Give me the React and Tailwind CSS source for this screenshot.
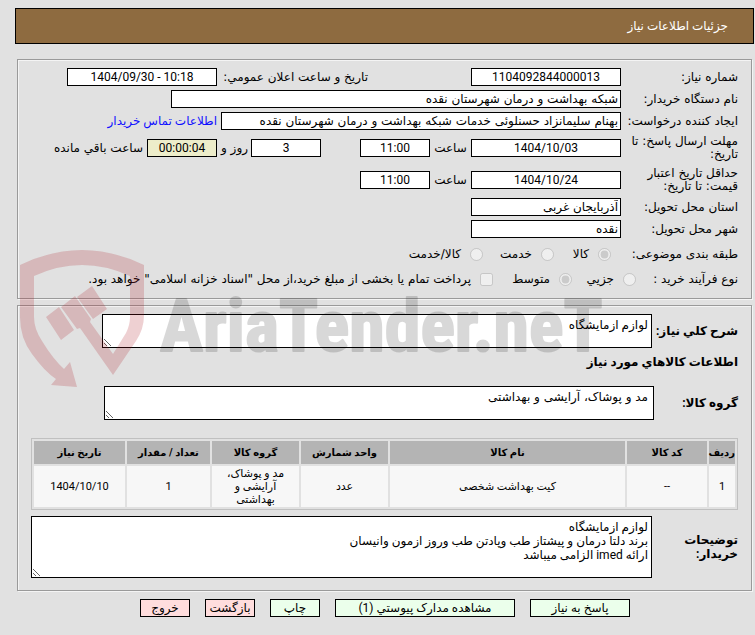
const COLUMNS = [
  { label: 'ردیف', width: 'w-[26px]' },
  { label: 'کد کالا', width: 'w-[80px]' },
  { label: 'نام کالا', width: '' },
  { label: 'واحد شمارش', width: 'w-[87px]' },
  { label: 'گروه کالا', width: 'w-[87px]' },
  { label: 'تعداد / مقدار', width: 'w-[83px]' },
  { label: 'تاریخ نیاز', width: 'w-[91px]' },
];

const ITEMS = [
  ['1', '--', 'کیت بهداشت شخصی', 'عدد', 'مد و پوشاک، آرایشی و بهداشتی', '1', '1404/10/10'],
];

const ACTIONS = [
  { label: 'پاسخ به نیاز', style: 'w-[100px] bg-[#ebffeb]' },
  { label: 'مشاهده مدارک پیوستي (1)', style: 'w-[180px] bg-[#ebffeb]' },
  { label: 'چاپ', style: 'w-[50px] bg-[#ebffeb]' },
  { label: 'بازگشت', style: 'w-[50px] bg-[#ffdddd]' },
  { label: 'خروج', style: 'w-[50px] bg-[#ffdddd]' },
];

function Field({ id, value, className = '', ...rest }) {
  return (
    <input
      id={id}
      type="text"
      readOnly
      defaultValue={value}
      className={`h-[18px] shrink-0 border border-black px-0.5 ${className}`}
      {...rest}
    />
  );
}

// Dates, hours and counts
function NumberField({ className = '', ...rest }) {
  return <Field className={`text-center font-['Roboto','DejaVu_Sans',sans-serif] ${className}`} {...rest} />;
}

function Row({ label, htmlFor, tall = false, children }) {
  return (
    <div className={`flex items-center ${tall ? 'h-8' : 'h-[22px]'}`}>
      <label htmlFor={htmlFor} className="w-[117px] shrink-0 leading-[13px]">{label}</label>
      {children}
    </div>
  );
}

function Choice({ type = 'radio', name, label, checked = false, className = '' }) {
  return (
    <label className={`flex shrink-0 items-center gap-[9px] whitespace-nowrap ${className}`}>
      <input type={type} name={name} defaultChecked={checked} disabled className="size-[13px] shrink-0" />
      {label}
    </label>
  );
}

function Panel({ className = '', children }) {
  return (
    <fieldset className={`ml-[17px] mr-[3px] min-w-0 border border-[#9a9a9a] shadow-[1px_1px_0_#f4f4f4,inset_1px_1px_0_#f4f4f4] ${className}`}>
      {children}
    </fieldset>
  );
}

function Watermark() {
  return (
    <div dir="ltr" aria-hidden="true" className="pointer-events-none absolute left-5 top-[249px]">
      <svg width="600" height="140" viewBox="0 0 600 140">
        <g fill="#aa141e" fillOpacity="0.2">
          <path d="M0 16Q62-14 124 16V66Q124 80 116 92L93 126L60 79L57 80L41 58L55 47L71 70L70 73L93 105L106 84Q110 76 110 68V27Q62 5 14 27V68Q14 80 22 92Q33 110 44 120L50 113L57 138L31 136L36 130Q25 123 12 105Q0 89 0 68Z" />
          <path d="M26 68L39 58L54 81L41 91ZM57 48L72 37L87 60L73 70Z" />
        </g>
        <text
          x="140"
          y="102"
          fill="#000"
          stroke="#000"
          strokeWidth="2"
          strokeLinejoin="round"
          opacity="0.15"
          className="font-['Roboto_Condensed','Liberation_Sans_Narrow','Roboto',sans-serif] text-[72px] font-bold"
        >
          AriaTender.neT
        </text>
      </svg>
    </div>
  );
}

export default function App() {
  return (
    <div dir="rtl" className="relative min-h-screen bg-[#e1e1e1] pt-2 pb-[18px] font-['Roboto','DejaVu_Sans',sans-serif] text-[12px] leading-[14px] text-black">
      <header className="ml-[15px] mr-px flex h-9 items-center border border-black bg-[#8e6b40] px-[25px]">
        <h1 className="text-white">جزئیات اطلاعات نیاز</h1>
      </header>

      {/* Request details */}
      <Panel className="mt-[15px] pt-1.5 pb-2 pr-[13px] font-['DejaVu_Sans',sans-serif]">
        <Row label="شماره نیاز:" htmlFor="number">
          <NumberField id="number" value="1104092844000013" className="w-[150px] bg-white" />
          <label htmlFor="announced" className="mr-[103px] w-[147px] shrink-0 whitespace-nowrap">تاریخ و ساعت اعلان عمومي:</label>
          <NumberField id="announced" dir="ltr" value="1404/09/30 - 10:18" className="mr-1 w-[150px] bg-white" />
        </Row>
        <Row label="نام دستگاه خریدار:" htmlFor="buyer">
          <Field id="buyer" value="شبکه بهداشت و درمان شهرستان نقده" className="w-[450px] bg-white" />
        </Row>
        <Row label="ایجاد کننده درخواست:" htmlFor="creator">
          <Field id="creator" value="بهنام سلیمانزاد حسنلوئی خدمات شبکه بهداشت و درمان شهرستان نقده" className="w-[400px] bg-white" />
          <a href="#contact" className="mr-1 font-['Roboto','DejaVu_Sans',sans-serif] whitespace-nowrap text-[#1010ff]">اطلاعات تماس خریدار</a>
        </Row>
        <Row label="مهلت ارسال پاسخ: تا تاریخ:" htmlFor="deadline" tall>
          <NumberField id="deadline" value="1404/10/03" className="w-[150px] bg-white" />
          <label htmlFor="deadline-hour" className="w-[41px] shrink-0 text-center">ساعت</label>
          <NumberField id="deadline-hour" value="11:00" className="w-[70px] bg-white" />
          <NumberField aria-label="روز" value="3" className="mr-[39px] w-[70px] bg-white" />
          <span className="w-[34px] shrink-0 pr-[3px]">روز و</span>
          <NumberField id="remaining" value="00:00:04" className="w-[70px] bg-[#ededca]" />
          <label htmlFor="remaining" className="mr-1 whitespace-nowrap">ساعت باقي مانده</label>
        </Row>
        <Row label="حداقل تاریخ اعتبار قیمت: تا تاریخ:" htmlFor="validity" tall>
          <NumberField id="validity" value="1404/10/24" className="w-[150px] bg-white" />
          <label htmlFor="validity-hour" className="w-[41px] shrink-0 text-center">ساعت</label>
          <NumberField id="validity-hour" value="11:00" className="w-[70px] bg-white" />
        </Row>
        <Row label="استان محل تحویل:" htmlFor="province">
          <Field id="province" value="آذربایجان غربی" className="w-[150px] bg-white" />
        </Row>
        <Row label="شهر محل تحویل:" htmlFor="city">
          <Field id="city" value="نقده" className="w-[150px] bg-white" />
        </Row>
        <div className="flex h-7 items-center">
          <span className="w-[127px] shrink-0">طبقه بندی موضوعی:</span>
          <Choice name="subject" label="کالا" checked className="w-[57px]" />
          <Choice name="subject" label="خدمت" className="w-[71px]" />
          <Choice name="subject" label="کالا/خدمت" />
        </div>
        <div className="flex h-[22px] items-center">
          <span className="w-[102px] shrink-0">نوع فرآیند خرید :</span>
          <Choice name="process" label="جزیي" className="w-[64px]" />
          <Choice name="process" label="متوسط" checked className="w-[79px]" />
          <Choice type="checkbox" name="treasury" label='پرداخت تمام یا بخشی از مبلغ خرید،از محل "اسناد خزانه اسلامی" خواهد بود.' />
        </div>
      </Panel>

      {/* Goods */}
      <Panel className="mt-1.5 pt-2 pb-3 pl-[13px] pr-[13px]">
        <div className="flex items-center">
          <label htmlFor="summary" className="w-[86px] shrink-0 font-bold">شرح کلي نیاز:</label>
          <textarea id="summary" readOnly defaultValue="لوازم ازمایشگاه" className="h-[34px] w-[550px] resize border border-black bg-white p-[3px]" />
        </div>
        <h2 className="mt-[7px] font-bold">اطلاعات کالاهاي مورد نیاز</h2>
        <div className="mt-[17px] flex items-center">
          <label htmlFor="group" className="w-[84px] shrink-0 font-bold">گروه کالا:</label>
          <textarea id="group" readOnly defaultValue="مد و پوشاک، آرایشی و بهداشتی" className="h-[34px] w-[550px] resize border border-black bg-white p-[3px] pr-[5px] font-['DejaVu_Sans',sans-serif]" />
        </div>

        <table className="mt-[18px] w-full table-fixed border-separate border-spacing-0.5 border border-[#c0c0c0] text-center text-[11px] leading-[13px]">
          <thead>
            <tr className="h-[23px] text-[10px]">
              {COLUMNS.map((col) => (
                <th key={col.label} className={`bg-[#b4b4b4] p-0 font-bold whitespace-nowrap ${col.width}`}>{col.label}</th>
              ))}
            </tr>
          </thead>
          <tbody>
            {ITEMS.map((item) => (
              <tr key={item[0]} className="h-[41px] bg-[#f7f7f7]">
                {item.map((cell, i) => (
                  <td key={COLUMNS[i].label} className="px-2 py-px">{cell}</td>
                ))}
              </tr>
            ))}
          </tbody>
        </table>

        <div className="mt-1.5 flex items-center">
          <label htmlFor="notes" className="w-[86px] shrink-0 pl-6 font-bold">توضیحات خریدار:</label>
          <textarea
            id="notes"
            readOnly
            defaultValue={'لوازم ازمایشگاه\nبرند دلتا درمان و پیشتاز طب وپادتن طب وروز ازمون وانیسان\nارائه imed الزامی میباشد'}
            className="h-[62px] min-w-0 flex-1 resize border border-black bg-white p-[3px]"
          />
        </div>
      </Panel>

      {/* Actions */}
      <div className="mt-2 ml-[15px] flex justify-center gap-[15px]">
        {ACTIONS.map((action) => (
          <button key={action.label} type="button" className={`h-[18px] border border-black whitespace-nowrap ${action.style}`}>
            {action.label}
          </button>
        ))}
      </div>

      <Watermark />
    </div>
  );
}
